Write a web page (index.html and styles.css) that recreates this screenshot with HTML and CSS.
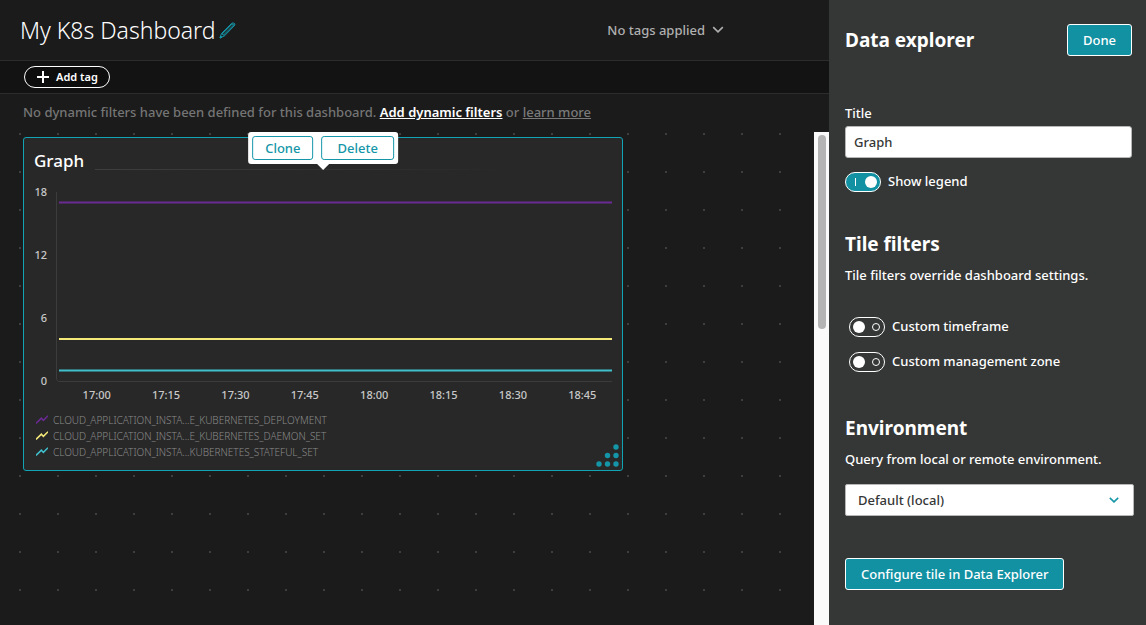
FILE: index.html
```html
<!DOCTYPE html>
<html lang="en">
<head>
<meta charset="utf-8">
<title>My K8s Dashboard</title>
<link rel="stylesheet" href="styles.css">
</head>
<body>
<div class="app">
  <main class="main">
    <header class="header">
      <h1 class="header-title">My K8s Dashboard</h1>
      <button class="edit" type="button" aria-label="Rename dashboard">
        <svg width="17" height="17" viewBox="0 0 17 17" fill="none" stroke="#1496a8" stroke-width="1">
          <path d="M1 16 L2.5 11.5 L12.5 1.5 L15.5 3.5 L5.5 13.8 Z"/>
          <path d="M3.2 12 L13.2 2 M4.6 13 L14.6 3 M2.5 11.5 L5.5 13.8"/>
          <path d="M1 16 L1.6 14 L3 15.2 Z" fill="#1496a8"/>
          <path d="M12.5 1.5 L14 .8 L16 2 L15.5 3.5"/>
        </svg>
      </button>
      <button class="tags-menu" type="button">No tags applied
        <svg width="12" height="8" viewBox="0 0 12 8" fill="none" stroke="currentColor" stroke-width="1.6"><path d="M1.2 1.2 L6 5.8 L10.8 1.2"/></svg>
      </button>
    </header>
    <div class="tagbar">
      <button class="add-tag" type="button">
        <svg width="12" height="12" viewBox="0 0 12 12" stroke="#fff" stroke-width="2"><path d="M6 0V12M0 6H12"/></svg>
        Add tag
      </button>
    </div>
    <p class="filters">No dynamic filters have been defined for this dashboard. <a class="filters-add" href="#">Add dynamic filters</a> or <a class="filters-more" href="#">learn more</a></p>
    <div class="board">
      <div class="canvas">
        <section class="tile">
          <div class="tile-head"><h2 class="tile-title">Graph</h2><span class="tile-rule"></span></div>
          <div class="chart">
            <div class="y-axis"><span>18</span><span>12</span><span>6</span><span>0</span></div>
            <svg class="plot" viewBox="0 0 556 190" preserveAspectRatio="none" fill="none">
              <path d="M.5 0V187.5L2.5 189.5H556" stroke="#3c3c3c"/>
              <path d="M3 10.5H556" stroke="#6a2a93" stroke-width="2"/>
              <path d="M3 147H556" stroke="#f5e97a" stroke-width="2"/>
              <path d="M3 178.5H556" stroke="#40bfcd" stroke-width="2"/>
            </svg>
          </div>
          <div class="x-axis"><span>17:00</span><span>17:15</span><span>17:30</span><span>17:45</span><span>18:00</span><span>18:15</span><span>18:30</span><span>18:45</span></div>
          <ul class="legend">
            <li class="legend-row"><svg class="mark mark-purple" viewBox="0 0 12 9"><path d="M0 8.4L5.4 3.2L7.4 5.4L12 .8"/></svg>CLOUD_APPLICATION_INSTA...E_KUBERNETES_DEPLOYMENT</li>
            <li class="legend-row"><svg class="mark mark-yellow" viewBox="0 0 12 9"><path d="M0 8.4L5.4 3.2L7.4 5.4L12 .8"/></svg>CLOUD_APPLICATION_INSTA...E_KUBERNETES_DAEMON_SET</li>
            <li class="legend-row"><svg class="mark mark-cyan" viewBox="0 0 12 9"><path d="M0 8.4L5.4 3.2L7.4 5.4L12 .8"/></svg>CLOUD_APPLICATION_INSTA...KUBERNETES_STATEFUL_SET</li>
          </ul>
          <svg class="grip" width="23" height="23" viewBox="0 0 23 23" fill="#1496a8"><circle cx="20" cy="3" r="2.7"/><circle cx="11.5" cy="11.5" r="2.7"/><circle cx="20" cy="11.5" r="2.7"/><circle cx="3" cy="20" r="2.7"/><circle cx="11.5" cy="20" r="2.7"/><circle cx="20" cy="20" r="2.7"/></svg>
          <div class="popup"><button class="popup-btn" type="button">Clone</button><button class="popup-btn popup-delete" type="button">Delete</button></div>
        </section>
      </div>
      <div class="scrollbar"><div class="thumb"></div></div>
    </div>
  </main>
  <aside class="panel">
    <div class="panel-head"><h2 class="panel-title">Data explorer</h2><button class="primary" type="button">Done</button></div>
    <label class="field-label" for="title">Title</label>
    <input class="field" id="title" type="text" value="Graph">
    <label class="switch"><input class="switch-input" type="checkbox" role="switch" checked>Show legend</label>
    <h2 class="panel-title section">Tile filters</h2>
    <p class="desc">Tile filters override dashboard settings.</p>
    <div class="switches">
      <label class="switch"><input class="switch-input" type="checkbox" role="switch">Custom timeframe</label>
      <label class="switch"><input class="switch-input" type="checkbox" role="switch">Custom management zone</label>
    </div>
    <h2 class="panel-title section">Environment</h2>
    <p class="desc">Query from local or remote environment.</p>
    <div class="select-wrap">
      <select class="select" aria-label="Environment"><option>Default (local)</option></select>
      <svg class="select-arrow" width="10" height="6" viewBox="0 0 10 6" fill="none" stroke="#1496a8" stroke-width="1.6"><path d="M.8 .8L5 4.8L9.2 .8"/></svg>
    </div>
    <button class="primary" type="button">Configure tile in Data Explorer</button>
  </aside>
</div>
</body>
</html>
```
FILE: styles.css
```css
*, *::before, *::after { box-sizing: border-box; }
body { margin: 0; background: #1b1b1b; color: #fff; font: 500 13px/20px "Noto Sans", "Open Sans", sans-serif; }
button, input, select { font: inherit; color: inherit; }
button { cursor: pointer; }
h1, h2, p, ul { margin: 0; padding: 0; }
svg { flex: none; }
.app { display: flex; min-height: 100vh; }
.main { flex: 1; min-width: 0; display: flex; flex-direction: column; }

.header { display: flex; align-items: center; height: 61px; padding: 0 105px 0 20px; border-bottom: 1px solid #2c2c2c; }
.header-title { font-size: 23px; line-height: 30px; font-weight: 300; }
.edit { display: flex; margin-left: 3px; padding: 0; border: 0; background: none; }
.tags-menu { display: flex; align-items: center; gap: 7px; margin-left: auto; padding: 0; border: 0; background: none; color: #b0b0b0; }

.tagbar { display: flex; align-items: center; height: 33px; padding: 0 24px; background: #131313; border-bottom: 1px solid #2c2c2c; }
.add-tag { display: flex; align-items: center; gap: 7px; height: 22px; padding: 0 11px 0 12px; border: 1px solid #fff; border-radius: 11px; background: #0d0d0d; font-size: 11px; font-weight: 600; line-height: 16px; }

.filters { padding: 8px 23px 10px; color: #757575; }
.filters-add { color: #fff; font-weight: 600; }
.filters-more { color: #7a7a7a; }

.board { flex: 1; display: flex; }
.canvas { flex: 1; min-width: 0; padding: 5px 23px 23px; background: conic-gradient(from 270deg at 2px 2px, #3e3e3e 25%, transparent 0) 19px 1px / 38px 38px; }
.scrollbar { width: 15px; padding: 3px 4px; background: #fafafa; }
.thumb { width: 8px; height: 194px; border-radius: 4px; background: #b4b4b4; }

.tile { position: relative; max-width: 600px; padding: 10px 5px 10px 10px; border: 1px solid #12a3b4; border-radius: 3px; background: #282828; }
.tile-head { display: flex; align-items: center; gap: 11px; padding-right: 100px; }
.tile-title { font-size: 17px; line-height: 26px; font-weight: 500; }
.tile-rule { flex: 1; height: 1px; margin-top: 16px; background: linear-gradient(90deg, #3e3e3e, #282828); }
.chart { display: flex; gap: 9px; padding: 12px 0 0; }
.y-axis { display: flex; flex-direction: column; justify-content: space-between; width: 13px; padding-bottom: 1px; text-align: right; font-size: 11px; line-height: 12px; color: #c8c8c8; }
.plot { flex: 1; min-width: 0; height: 190px; margin: 6px 5px 6px 0; }
.x-axis { display: flex; padding-left: 28px; font-size: 11px; line-height: 14px; color: #c8c8c8; }
.x-axis span { flex: 1; text-align: center; }
.legend { padding: 10px 0 0 2px; list-style: none; font-size: 10px; line-height: 16px; font-weight: 300; color: #8a8a8a; }
.legend-row { display: flex; align-items: center; gap: 5px; }
.mark { width: 12px; height: 9px; margin-bottom: 2px; fill: none; stroke-width: 1.5; }
.mark-purple { stroke: #6a2a93; }
.mark-yellow { stroke: #f5e97a; }
.mark-cyan { stroke: #40bfcd; }
.grip { position: absolute; right: 3px; bottom: 3px; }
.popup { position: absolute; top: -6px; left: 50%; display: flex; gap: 8px; padding: 4px; border-radius: 3px; background: #fff; transform: translateX(-50%); }
.popup::after { content: ""; position: absolute; top: 100%; left: 50%; margin-left: -6px; border: 6px solid transparent; border-top-color: #fff; border-bottom: 0; }
.popup-btn { height: 24px; padding: 0 12px; border: 1px solid #1496a8; border-radius: 3px; background: #fff; color: #1496a8; line-height: 20px; }
.popup-delete { padding: 0 15px; }

.panel { flex: none; width: 317px; padding: 24px 14px 24px 16px; background: #353736; }
.panel-head { display: flex; align-items: center; justify-content: space-between; margin-bottom: 47px; }
.panel-title { font-size: 19px; line-height: 28px; font-weight: 700; }
.primary { height: 32px; padding: 0 15px; border: 1px solid #fff; border-radius: 3px; background: #1291a3; }
.field-label { display: block; margin-bottom: 3px; }
.field { display: block; width: 100%; height: 32px; margin-bottom: 13px; padding: 0 8px; border: 1px solid #b7b7b7; border-radius: 3px; background: #fff; color: #353736; }
.switch { display: flex; align-items: flex-start; gap: 7px; }
.switch-input { appearance: none; position: relative; width: 36px; height: 20px; margin: 1px 0 0; border: 1px solid #fff; border-radius: 10px; }
.switch-input::before { content: ""; position: absolute; top: 3px; left: 3px; width: 12px; height: 12px; border-radius: 50%; background: #fff; }
.switch-input::after { content: ""; position: absolute; top: 5px; right: 4px; width: 8px; height: 8px; border: 1px solid #fff; border-radius: 50%; }
.switch-input:checked { background: #1291a3; }
.switch-input:checked::before { left: 19px; }
.switch-input:checked::after { right: auto; left: 9px; width: 1px; height: 8px; border-width: 0 0 0 1px; border-radius: 0; }
.section { margin-top: 38px; margin-bottom: 7px; }
.switches { display: grid; gap: 14px; margin-top: 31px; padding-left: 4px; }
.switches + .section { margin-top: 42px; }
.select-wrap { position: relative; margin: 15px -2px 42px 0; }
.select { appearance: none; display: block; width: 100%; height: 32px; padding: 0 12px; border: 1px solid #b7b7b7; border-radius: 2px; background: #fff; color: #353736; }
.select-arrow { position: absolute; top: 13px; right: 15px; pointer-events: none; }
```
